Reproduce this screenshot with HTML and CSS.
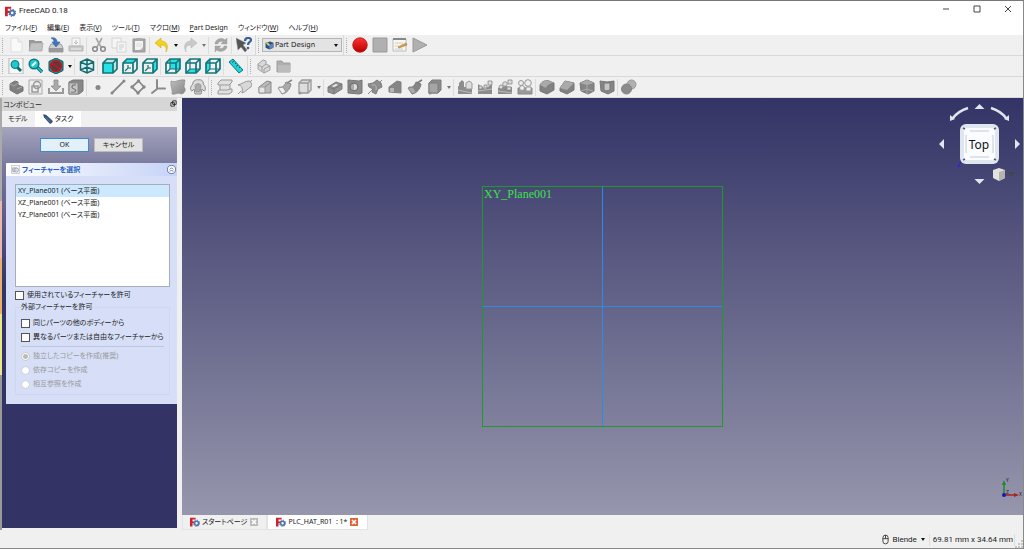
FILE: index.html
```html
<!DOCTYPE html>
<html lang="ja">
<head>
  <meta charset="UTF-8">
  <meta name="viewport" content="width=device-width, initial-scale=1.0">
  <title>FreeCAD 0.18</title>
  <link rel="stylesheet" href="styles.css">
</head>
<body>
  <svg class="sprite" aria-hidden="true">
    <defs>
      <linearGradient id="red" x1="0" y1="0" x2="0" y2="1"><stop offset="0" stop-color="#f33"/><stop offset="1" stop-color="#b80000"/></linearGradient>
      <linearGradient id="grey" x1="0" y1="0" x2="1" y2="1"><stop offset="0" stop-color="#bdbdbd"/><stop offset="1" stop-color="#868686"/></linearGradient>
    </defs>

    <!-- application -->
    <symbol id="i-app" viewBox="0 0 16 16"><path d="M0 1h9v3H4v3h4v3H4v5H0z" fill="#d0202a"/><circle cx="10.5" cy="10" r="5" fill="none" stroke="#3a5fa0" stroke-width="1.5" stroke-dasharray="2 1.9"/><circle cx="10.5" cy="10" r="3.2" fill="#fff" stroke="#4a72b4" stroke-width="2.6"/></symbol>

    <!-- file toolbar -->
    <symbol id="i-new" viewBox="0 0 16 16"><path d="M3 1h7l4 4v10H3z" fill="#f9f9f9" stroke="#dedede"/><path d="M10 1v4h4" fill="#eee" stroke="#ddd"/></symbol>
    <symbol id="i-open" viewBox="0 0 16 16"><path d="M1 3h5l1 1h7v10H1z" fill="#999"/><path d="M3 6h12l-1 8H1z" fill="#c2c2c2" stroke="#a5a5a5" stroke-width=".7"/></symbol>
    <symbol id="i-save" viewBox="0 0 16 16"><path d="M3 7h10l2 4v4H1v-4z" fill="#cfcfcf" stroke="#8d8d8d" stroke-width=".8"/><path d="M1 11h14v4H1z" fill="#999"/><path d="M3 1c4-1 6 1 6 4h3l-4 5-4-5h2c0-2-1-3-3-4z" fill="#3c78c0" stroke="#28548c" stroke-width=".5"/></symbol>
    <symbol id="i-print" viewBox="0 0 16 16"><path d="M4 1h8v8H4z" fill="#f5f5f5" stroke="#d2d2d2"/><path d="M8 3v4M6 5l2 2 2-2" stroke="#bbb" fill="none"/><path d="M1 9h14v5H1z" fill="#c9c9c9" stroke="#b5b5b5"/><path d="M3 12h10" stroke="#eee"/></symbol>
    <symbol id="i-cut" viewBox="0 0 16 16"><path d="M5 1l5 9M11 1L6 10" stroke="#a9a9a9" stroke-width="1.6"/><g fill="none" stroke="#888" stroke-width="1.5"><circle cx="4" cy="12" r="2.3"/><circle cx="12" cy="12" r="2.3"/></g></symbol>
    <symbol id="i-copy" viewBox="0 0 16 16"><g fill="#f5f5f5" stroke="#d4d4d4"><path d="M1 1h9v10H1z"/><path d="M6 5h9v10H6z"/></g><path d="M8 8h5M8 10h5M8 12h3" stroke="#ccc"/></symbol>
    <symbol id="i-paste" viewBox="0 0 16 16"><path d="M2 2h12v13H2z" fill="#a5a5a5" stroke="#999"/><path d="M4 4h8v9H4z" fill="#f3f3f3"/><path d="M5 1h6v3H5z" fill="#aaa"/><path d="M5 7h6M5 9h6" stroke="#ddd"/><path d="M12 10v3H9z" fill="#bbb"/></symbol>
    <symbol id="i-undo" viewBox="0 0 16 16"><path d="M7 1v3c6 0 8 5 5 11 1-5-1-7-5-7v3L1 6z" fill="#f2d21c" stroke="#cfae10" stroke-width=".6"/></symbol>
    <symbol id="i-redo" viewBox="0 0 16 16"><path d="M9 1v3C3 4 1 9 4 15 3 10 5 8 9 8v3l6-5z" fill="#c9c9c9" stroke="#b8b8b8" stroke-width=".6"/></symbol>
    <symbol id="i-refresh" viewBox="0 0 16 16"><path d="M2 7c0-5 7-7 10-4l2-2v6H8l2-2C8 4 5 5 5 7zM14 9c0 5-7 7-10 4l-2 2V9h6l-2 2c2 1 5 0 5-2z" fill="#a6a6a6" stroke="#999" stroke-width=".4"/></symbol>
    <symbol id="i-help" viewBox="0 0 16 16"><path d="M0 1l10 5-3 2 4 5-2 2-4-5-3 3z" fill="#555" stroke="#888" stroke-width=".5"/><path d="M9 4c0-4 6-4 6-1 0 2-3 2-3 5" fill="none" stroke="#3b6096" stroke-width="2.2"/><circle cx="12" cy="11" r="1.3" fill="#3b6096"/></symbol>
    <symbol id="i-record" viewBox="0 0 16 16"><circle cx="8" cy="8" r="7.3" fill="url(#red)" stroke="#a11" stroke-width=".7"/></symbol>
    <symbol id="i-stop" viewBox="0 0 16 16"><path d="M1 1h14v14H1z" fill="#b0b0b0" stroke="#999"/></symbol>
    <symbol id="i-edit" viewBox="0 0 16 16"><path d="M1 2h13v12H1z" fill="#f7f7f2" stroke="#bbb"/><path d="M1 1h13v2H1z" fill="#888"/><path d="M3 6h8M3 9h4M3 12h8" stroke="#ccc"/><path d="M6 10l8-4 1 2-8 3z" fill="#e3a13a" stroke="#9a6a23" stroke-width=".5"/></symbol>
    <symbol id="i-play" viewBox="0 0 16 16"><path d="M1 1l14 7-14 7z" fill="#b0b0b0" stroke="#999"/></symbol>

    <!-- view toolbar -->
    <symbol id="i-fitall" viewBox="0 0 16 16"><path d="M1 0h14v16H1z" fill="#f8f8f8" stroke="#b5b5b5"/><path d="M9 9l4 4" stroke="#0b6a70" stroke-width="3"/><circle cx="7" cy="6.500" r="3.800" fill="#25c8cd" stroke="#0b8a90" stroke-width="1.300"/></symbol>
    <symbol id="i-fitsel" viewBox="0 0 16 16"><path d="M9 9l5 5" stroke="#0b6a70" stroke-width="3.4"/><path d="M9 9l5 5" stroke="#25c8cd" stroke-width="1.6"/><circle cx="6" cy="6" r="4.8" fill="#25c8cd" stroke="#0b7a80" stroke-width="1.5"/><path d="M4 8l4-4" stroke="#dff" stroke-width="2"/></symbol>
    <symbol id="i-drawstyle" viewBox="0 0 16 16"><path d="M8 0l7 3.500v9L8 16l-7-3.500v-9z" fill="#1a9499" stroke="#0b5a5e"/><circle cx="8" cy="8" r="5.300" fill="#444" stroke="#c4161c" stroke-width="1.800"/><path d="M4 5l8 6" stroke="#c4161c" stroke-width="2"/></symbol>
    <symbol id="i-axo" viewBox="0 0 16 16"><path d="M8 1l6.500 3v8L8 15l-6.500-3V4z" fill="#d8eeee"/><path d="M8 1l6.500 3v8L8 15l-6.500-3V4zM8 1v14M1.500 4L8 7l6.500-3M1.500 12L8 9l6.500 3" fill="none" stroke="#136a6e" stroke-width="1.500"/></symbol>
    <symbol id="cube" viewBox="0 0 16 16"><path d="M1 5l4-4h10v10l-4 4H1zM1 5h10v10M11 5l4-4" fill="none" stroke="#12757a" stroke-width="1.700"/></symbol>
    <symbol id="i-front" viewBox="0 0 16 16"><path d="M1 5l4-4h10v10l-4 4V5z" fill="#bfe4e4"/><path d="M1 5h10v10H1z" fill="#2be0e4"/><use href="#cube"/></symbol>
    <symbol id="i-top" viewBox="0 0 16 16"><path d="M1 5l4-4h10l-4 4z" fill="#2be0e4"/><path d="M3 13l3-3h3M6 7v3" stroke="#12757a" stroke-width="1.200" fill="none"/><use href="#cube"/></symbol>
    <symbol id="i-right" viewBox="0 0 16 16"><path d="M11 5l4-4v10l-4 4z" fill="#2be0e4"/><path d="M3 13l3-3h3M6 7v3" stroke="#12757a" stroke-width="1.200" fill="none"/><use href="#cube"/></symbol>
    <symbol id="i-rear" viewBox="0 0 16 16"><path d="M5 1h10v10H5z" fill="#2be0e4"/><path d="M5 1v10h10M1 15l4-4" stroke="#12757a" stroke-width="1.200" fill="none"/><use href="#cube"/></symbol>
    <symbol id="i-bottom" viewBox="0 0 16 16"><path d="M1 15l4-4h10l-4 4z" fill="#2be0e4"/><path d="M5 1v10h10M1 15l4-4" stroke="#12757a" stroke-width="1.200" fill="none"/><use href="#cube"/></symbol>
    <symbol id="i-left" viewBox="0 0 16 16"><path d="M1 5l4-4v10l-4 4z" fill="#2be0e4"/><path d="M5 1v10h10M1 15l4-4" stroke="#12757a" stroke-width="1.200" fill="none"/><use href="#cube"/></symbol>
    <symbol id="i-measure" viewBox="0 0 16 16"><path d="M1 4l4-3 10 11-4 3z" fill="#25d0d5" stroke="#0b7a80"/><path d="M6 3L4 4.500M8 5L7 6M10 7L8 8.500M12 9l-1 1" stroke="#0b6468"/></symbol>
    <symbol id="i-part" viewBox="0 0 16 16"><path d="M2 6l5-4 3 1v3l4 2v4l-6 3-6-4z" fill="#d9d9d9" stroke="#a0a0a0"/><path d="M2 7l4 2 4-3M6 9v4M8 11l6-3M8 11v4" fill="none" stroke="#a0a0a0"/></symbol>
    <symbol id="i-group" viewBox="0 0 16 16"><path d="M1 3h5l1 2h7v9H1z" fill="#aeaeae" stroke="#a0a0a0"/><path d="M2 7h12v7H2z" fill="#bcbcbc"/></symbol>

    <!-- part design helpers -->
    <symbol id="i-body" viewBox="0 0 16 16"><path d="M2 5l5-3 3 1v3l5 2v4l-6 3-7-4z" fill="#808080" stroke="#707070"/><path d="M2 5l4 2 4-3M9 10l5-2" fill="none" stroke="#aaa"/></symbol>
    <symbol id="i-sketch" viewBox="0 0 16 16"><path d="M1 1h13v14H1z" fill="#eee" stroke="#aaa"/><circle cx="9" cy="6" r="3.500" fill="none" stroke="#999" stroke-width="1.500"/><path d="M4 7h6v6H4z" fill="none" stroke="#999" stroke-width="1.500"/></symbol>
    <symbol id="i-import" viewBox="0 0 16 16"><path d="M1 9v5h14V9" fill="none" stroke="#999" stroke-width="2"/><path d="M6 1h4v6h3l-5 5-5-5h3z" fill="#aaa" stroke="#888" stroke-width=".7"/></symbol>
    <symbol id="i-mapsketch" viewBox="0 0 16 16"><path d="M1 3l4-2h10v11l-4 3H1z" fill="#888" stroke="#777"/><path d="M1 4h9v11H1z" fill="#c5c5c5" stroke="#888"/><path d="M8 6c-5-1-5 3-2 4s2 4-3 3" fill="none" stroke="#777" stroke-width="1.200"/></symbol>
    <symbol id="i-point" viewBox="0 0 16 16"><circle cx="8" cy="8.500" r="2.500" fill="#888"/></symbol>
    <symbol id="i-line" viewBox="0 0 16 16"><path d="M2 14L14 2" stroke="#8a8a8a" stroke-width="1.800"/><circle cx="2" cy="14" r="1.500" fill="#888"/><circle cx="14" cy="2" r="1.500" fill="#888"/></symbol>
    <symbol id="i-plane" viewBox="0 0 16 16"><path d="M8.500 2L14 8l-6 6-6-6z" fill="none" stroke="#8a8a8a" stroke-width="1.800"/><g fill="#888"><circle cx="8.500" cy="2" r="1.700"/><circle cx="14" cy="8" r="1.700"/><circle cx="8" cy="14" r="1.700"/><circle cx="2" cy="8" r="1.700"/></g></symbol>
    <symbol id="i-lcs" viewBox="0 0 16 16"><path d="M7 1v9M7 9.500h8M7 10l-5 4" stroke="#8a8a8a" stroke-width="2" stroke-linecap="round"/></symbol>
    <symbol id="i-binder" viewBox="0 0 16 16"><path d="M1 2c5 2 7-2 14-1l-1 7c3 3 0 7-3 7-3-2-6 1-9 0 1-4-2-8-1-13z" fill="url(#grey)" stroke="#888" stroke-width=".6"/></symbol>
    <symbol id="i-clone" viewBox="0 0 16 16"><path d="M3 5c-1-3 4-5 5-4 3-1 6 1 5 4 3 2 3 7 1 7l-2-2-1 5H5L4 10l-2 2c-2 0-2-5 1-7z" fill="#ddd" stroke="#8a8a8a"/><path d="M5 7c0-3 6-3 6 0l-1 6H6z" fill="#aaa" stroke="#999"/></symbol>

    <!-- additive features -->
    <symbol id="i-pad" viewBox="0 0 16 16"><g fill="#e0e0e0" stroke="#999"><path d="M1 12l3-2h11v3l-3 2H1z"/><path d="M3 5h10v5l-2 1H3z"/><path d="M1 4l3-3h11v2l-3 3H1z"/></g></symbol>
    <symbol id="i-revolve" viewBox="0 0 16 16"><path d="M1 15L15 1" stroke="#999"/><path d="M1 6c4-1 7-4 11-4 3 1 3 4 2 6-3 1-5 5-9 6 1-4-1-7-4-8z" fill="#d8d8d8" stroke="#999"/><path d="M1 6c4 0 5 4 4 8" fill="#eee" stroke="#999"/></symbol>
    <symbol id="i-loft" viewBox="0 0 16 16"><path d="M2 8l8-6 4 1v11H2z" fill="#bbb" stroke="#8a8a8a"/><path d="M2 8h6v6H2z" fill="#e5e5e5" stroke="#999"/><path d="M8 8l6-5" fill="none" stroke="#8a8a8a"/></symbol>
    <symbol id="i-pipe" viewBox="0 0 16 16"><path d="M2 8c4 1 6-2 7-5l5 2c-1 5-4 9-9 10z" fill="#aaa" stroke="#888"/><path d="M1 9l5-1 3 5-4 2z" fill="#eee" stroke="#999"/><path d="M10 4l5-3" stroke="#888" stroke-width="1.500"/></symbol>
    <symbol id="i-box" viewBox="0 0 16 16"><path d="M2 4l3-3h9v10l-3 3H2z" fill="#ddd" stroke="#999" stroke-width="1.300"/><path d="M2 4h9v10M11 4l3-3" fill="none" stroke="#999" stroke-width="1.300"/><circle cx="3" cy="14" r="1.500" fill="#999"/></symbol>

    <!-- subtractive features -->
    <symbol id="i-pocket" viewBox="0 0 16 16"><path d="M1 8l8-5 6 2v5l-8 5-6-2z" fill="#919191" stroke="#7c7c7c"/><path d="M1 8l6 2 8-5M7 10v5" fill="none" stroke="#777"/><path d="M5 7l4-2 2 1-4 2z" fill="#eee"/></symbol>
    <symbol id="i-hole" viewBox="0 0 16 16"><path d="M1 1l11 1 3-1v13l-3 1-11-1z" fill="#8a8a8a" stroke="#777"/><circle cx="7" cy="8" r="4" fill="#aaa" stroke="#6c6c6c"/><path d="M7 5a3 3 0 010 6z" fill="#ddd"/></symbol>
    <symbol id="i-groove" viewBox="0 0 16 16"><path d="M1 15L15 1" stroke="#888"/><path d="M1 5l5-1 4-3 4 3 1 4-4 2-2 5-4-2 1-3-4-2z" fill="#8e8e8e" stroke="#7c7c7c"/><path d="M5 6c3-1 5 1 4 5" fill="none" stroke="#bbb"/></symbol>
    <symbol id="i-subloft" viewBox="0 0 16 16"><path d="M2 8l8-6 4 1v11L2 13z" fill="#858585" stroke="#808080"/><path d="M3 9h4v4H3z" fill="#b5b5b5"/></symbol>
    <symbol id="i-subpipe" viewBox="0 0 16 16"><path d="M2 8c4 1 6-2 7-5l5 2c-1 5-4 9-9 10z" fill="#858585" stroke="#777"/><path d="M1 9l5-1 3 5-4 2z" fill="#aaa" stroke="#888"/><path d="M10 4l5-3" stroke="#777" stroke-width="1.500"/></symbol>
    <symbol id="i-subbox" viewBox="0 0 16 16"><path d="M2 4l3-3h9v10l-3 3H2z" fill="#8b8b8b" stroke="#7c7c7c"/><path d="M2 4h9v10H2z" fill="#a5a5a5" stroke="#7c7c7c"/><circle cx="3" cy="14" r="1.500" fill="#888"/></symbol>

    <!-- transformations -->
    <symbol id="i-mirror" viewBox="0 0 16 16"><path d="M1 7l7 1 7-1v8H1z" fill="#8c8c8c"/><path d="M1 11l14 3" stroke="#bbb"/><path d="M2 4l3-3 2 2v6H2z" fill="#8c8c8c"/><path d="M9 4l3-2 3 2v6H9z" fill="#ddd" stroke="#999"/></symbol>
    <symbol id="i-linear" viewBox="0 0 16 16"><path d="M1 5l7 5 7-5v10H1z" fill="#8c8c8c"/><path d="M1 12l14-2" stroke="#bbb"/><path d="M2 7h3v3H2zM7 6h3v3H7zM11 2h4v4h-4z" fill="#ddd" stroke="#888" stroke-width=".8"/></symbol>
    <symbol id="i-polar" viewBox="0 0 16 16"><path d="M1 9l7-2 7 1v7H1z" fill="#8c8c8c"/><path d="M1 12l14 2" stroke="#bbb"/><g fill="#ddd" stroke="#888" stroke-width=".8"><circle cx="4" cy="8" r="2"/><circle cx="8" cy="5" r="2.300"/><path d="M11 1h4v4h-4zM10 8h4v3h-4z"/></g></symbol>
    <symbol id="i-multi" viewBox="0 0 16 16"><path d="M1 9h14v6H1z" fill="#999" stroke="#888"/><g fill="#eee" stroke="#999"><circle cx="4" cy="4" r="2.500"/><circle cx="11" cy="4" r="3.300"/><circle cx="5" cy="9" r="2.500"/><path d="M9 8h5v4H9z"/></g></symbol>

    <!-- dress-up -->
    <symbol id="i-fillet" viewBox="0 0 16 16"><path d="M1 6c2-4 6-5 9-4l5 2v7l-7 4-7-3z" fill="#828282" stroke="#777"/><path d="M1 6l6 3c1-3 4-5 8-5l-5-2C6 1 2 3 1 6z" fill="#aaa"/></symbol>
    <symbol id="i-chamfer" viewBox="0 0 16 16"><path d="M1 9l5-7 9 2v7l-7 4-7-3z" fill="#828282" stroke="#777"/><path d="M1 9l5-7 9 2-7 7z" fill="#aaa"/></symbol>
    <symbol id="i-draft" viewBox="0 0 16 16"><path d="M1 4l7-3 7 3v8l-6 3-7-3z" fill="#858585" stroke="#777"/><path d="M1 4l7 2 7-2-7-3z" fill="#aaa"/><path d="M8 6v9M2 12l6-2 6 2" fill="none" stroke="#aaa"/></symbol>
    <symbol id="i-thick" viewBox="0 0 16 16"><path d="M1 2l7 1 7-1v10l-6 3-7-3z" fill="#858585" stroke="#777"/><path d="M5 4h6v7l-4 1-2-1z" fill="#c5c5c5" stroke="#777"/></symbol>
    <symbol id="i-boolean" viewBox="0 0 16 16"><circle cx="10.500" cy="5.500" r="4.500" fill="#b0b0b0" stroke="#9a9a9a"/><circle cx="5.500" cy="10" r="5" fill="#8b8b8b" stroke="#808080"/></symbol>

    <!-- panel bits -->
    <symbol id="i-pencil" viewBox="0 0 16 16"><path d="M1 1l4 1 10 9-1 3-3 1L2 5z" fill="#2f5687" stroke="#1d3454"/><path d="M4 5l8 8" stroke="#6f93bd"/></symbol>
    <symbol id="i-select" viewBox="0 0 16 16"><path d="M1 1h14v14H1z" fill="none" stroke="#667" stroke-dasharray="2 1.500"/><path d="M3 5h7v7H3z" fill="#ccd" stroke="#889"/><circle cx="10" cy="9" r="3.500" fill="#dde" stroke="#889"/></symbol>
    <symbol id="i-close" viewBox="0 0 10 10"><path d="M1 1h8v8H1z" fill="currentColor"/><path d="M3 3l4 4M7 3L3 7" stroke="#fff" stroke-width="1.600"/></symbol>
    <symbol id="i-wb" viewBox="0 0 16 16"><path d="M1 3l8-2 6 2v9l-7 3-7-3z" fill="#244f8e"/><path d="M7 7l8-3v8l-7 3z" fill="#5b83b8"/><path d="M1 3l4-1 4 5-3 2z" fill="#e7c63c"/></symbol>
  </svg>

  <div class="window">
    <header class="titlebar">
      <svg class="app-icon"><use href="#i-app"/></svg>
      <h1>FreeCAD 0.18</h1>
      <div class="window-buttons">
        <button aria-label="最小化"><svg viewBox="0 0 10 10"><path d="M2 5h6"/></svg></button>
        <button aria-label="最大化"><svg viewBox="0 0 10 10"><path d="M2 2h6v6H2z"/></svg></button>
        <button aria-label="閉じる"><svg viewBox="0 0 10 10"><path d="M2 2l6 6M8 2L2 8"/></svg></button>
      </div>
    </header>

    <nav class="menubar">
      <button>ファイル(<u>F</u>)</button>
      <button>編集(<u>E</u>)</button>
      <button>表示(<u>V</u>)</button>
      <button>ツール(<u>T</u>)</button>
      <button>マクロ(<u>M</u>)</button>
      <button><u>P</u>art Design</button>
      <button>ウィンドウ(<u>W</u>)</button>
      <button>ヘルプ(<u>H</u>)</button>
    </nav>

    <div class="toolrow">
      <div class="toolbar">
        <button class="tool" aria-label="新規"><svg><use href="#i-new"/></svg></button>
        <button class="tool" aria-label="開く"><svg><use href="#i-open"/></svg></button>
        <button class="tool" aria-label="保存"><svg><use href="#i-save"/></svg></button>
        <button class="tool" aria-label="印刷"><svg><use href="#i-print"/></svg></button>
        <span class="sep"></span>
        <button class="tool" aria-label="切り取り"><svg><use href="#i-cut"/></svg></button>
        <button class="tool" aria-label="コピー"><svg><use href="#i-copy"/></svg></button>
        <button class="tool" aria-label="貼り付け"><svg><use href="#i-paste"/></svg></button>
        <span class="sep"></span>
        <button class="tool" aria-label="元に戻す"><svg><use href="#i-undo"/></svg></button>
        <button class="drop" aria-label="元に戻す履歴"></button>
        <button class="tool" aria-label="やり直し"><svg><use href="#i-redo"/></svg></button>
        <button class="drop dim" aria-label="やり直し履歴"></button>
        <span class="sep"></span>
        <button class="tool" aria-label="更新"><svg><use href="#i-refresh"/></svg></button>
        <span class="sep"></span>
        <button class="tool" aria-label="ヘルプ"><svg><use href="#i-help"/></svg></button>
      </div>
      <div class="toolbar">
        <label class="workbench">
          <svg><use href="#i-wb"/></svg>
          <select aria-label="ワークベンチ"><option>Part Design</option></select>
        </label>
      </div>
      <div class="toolbar last">
        <button class="tool" aria-label="マクロの記録"><svg><use href="#i-record"/></svg></button>
        <button class="tool" aria-label="停止"><svg><use href="#i-stop"/></svg></button>
        <button class="tool" aria-label="マクロ"><svg><use href="#i-edit"/></svg></button>
        <button class="tool" aria-label="実行"><svg><use href="#i-play"/></svg></button>
      </div>
    </div>

    <div class="toolrow">
      <div class="toolbar">
        <button class="tool" aria-label="全てにフィット"><svg><use href="#i-fitall"/></svg></button>
        <button class="tool" aria-label="選択にフィット"><svg><use href="#i-fitsel"/></svg></button>
        <button class="tool" aria-label="描画スタイル"><svg><use href="#i-drawstyle"/></svg></button>
        <button class="drop" aria-label="描画スタイルの選択"></button>
        <span class="sep"></span>
        <button class="tool" aria-label="アイソメトリック"><svg><use href="#i-axo"/></svg></button>
        <span class="sep"></span>
        <button class="tool" aria-label="正面"><svg><use href="#i-front"/></svg></button>
        <button class="tool" aria-label="上面"><svg><use href="#i-top"/></svg></button>
        <button class="tool" aria-label="右面"><svg><use href="#i-right"/></svg></button>
        <span class="sep"></span>
        <button class="tool" aria-label="背面"><svg><use href="#i-rear"/></svg></button>
        <button class="tool" aria-label="底面"><svg><use href="#i-bottom"/></svg></button>
        <button class="tool" aria-label="左面"><svg><use href="#i-left"/></svg></button>
        <span class="sep"></span>
        <button class="tool" aria-label="測定"><svg><use href="#i-measure"/></svg></button>
      </div>
      <div class="toolbar last">
        <button class="tool" aria-label="パーツ"><svg><use href="#i-part"/></svg></button>
        <button class="tool" aria-label="グループ"><svg><use href="#i-group"/></svg></button>
      </div>
    </div>

    <div class="toolrow compact">
      <div class="toolbar">
        <button class="tool" aria-label="ボディー"><svg><use href="#i-body"/></svg></button>
        <button class="tool" aria-label="スケッチ"><svg><use href="#i-sketch"/></svg></button>
        <button class="tool" aria-label="スケッチの編集"><svg><use href="#i-import"/></svg></button>
        <button class="tool" aria-label="スケッチのマップ"><svg><use href="#i-mapsketch"/></svg></button>
        <span class="sep"></span>
        <button class="tool" aria-label="データム点"><svg><use href="#i-point"/></svg></button>
        <button class="tool" aria-label="データム線"><svg><use href="#i-line"/></svg></button>
        <button class="tool" aria-label="データム平面"><svg><use href="#i-plane"/></svg></button>
        <button class="tool" aria-label="座標系"><svg><use href="#i-lcs"/></svg></button>
        <button class="tool" aria-label="シェイプバインダー"><svg><use href="#i-binder"/></svg></button>
        <button class="tool" aria-label="クローン"><svg><use href="#i-clone"/></svg></button>
      </div>
      <div class="toolbar last">
        <button class="tool" aria-label="パッド"><svg><use href="#i-pad"/></svg></button>
        <button class="tool" aria-label="レボリューション"><svg><use href="#i-revolve"/></svg></button>
        <button class="tool" aria-label="加算ロフト"><svg><use href="#i-loft"/></svg></button>
        <button class="tool" aria-label="加算パイプ"><svg><use href="#i-pipe"/></svg></button>
        <button class="tool" aria-label="加算プリミティブ"><svg><use href="#i-box"/></svg></button>
        <button class="drop dim" aria-label="加算プリミティブの選択"></button>
        <span class="sep"></span>
        <button class="tool" aria-label="ポケット"><svg><use href="#i-pocket"/></svg></button>
        <button class="tool" aria-label="ホール"><svg><use href="#i-hole"/></svg></button>
        <button class="tool" aria-label="グルーブ"><svg><use href="#i-groove"/></svg></button>
        <button class="tool" aria-label="減算ロフト"><svg><use href="#i-subloft"/></svg></button>
        <button class="tool" aria-label="減算パイプ"><svg><use href="#i-subpipe"/></svg></button>
        <button class="tool" aria-label="減算プリミティブ"><svg><use href="#i-subbox"/></svg></button>
        <button class="drop dim" aria-label="減算プリミティブの選択"></button>
        <span class="sep"></span>
        <button class="tool" aria-label="鏡像"><svg><use href="#i-mirror"/></svg></button>
        <button class="tool" aria-label="直線状パターン"><svg><use href="#i-linear"/></svg></button>
        <button class="tool" aria-label="円状パターン"><svg><use href="#i-polar"/></svg></button>
        <button class="tool" aria-label="マルチ変換"><svg><use href="#i-multi"/></svg></button>
        <span class="sep"></span>
        <button class="tool" aria-label="フィレット"><svg><use href="#i-fillet"/></svg></button>
        <button class="tool" aria-label="面取り"><svg><use href="#i-chamfer"/></svg></button>
        <button class="tool" aria-label="抜き勾配"><svg><use href="#i-draft"/></svg></button>
        <button class="tool" aria-label="厚み"><svg><use href="#i-thick"/></svg></button>
        <span class="sep"></span>
        <button class="tool" aria-label="ブーリアン"><svg><use href="#i-boolean"/></svg></button>
      </div>
    </div>

    <div class="workspace">
      <aside class="combo-view">
        <div class="dock-title">
          <span>コンボビュー</span>
          <button aria-label="フロート"><svg viewBox="0 0 8 8"><path d="M3 1h4v4H3zM1 3h4v4H1z"/></svg></button>
        </div>
        <div class="dock-tabs">
          <button>モデル</button>
          <button class="active"><svg><use href="#i-pencil"/></svg>タスク</button>
        </div>
        <div class="task-panel">
          <div class="task-buttons">
            <button class="primary">OK</button>
            <button>キャンセル</button>
          </div>
          <section class="task-box">
            <header>
              <svg class="task-icon"><use href="#i-select"/></svg>
              <h2>フィーチャーを選択</h2>
              <button class="collapse" aria-label="折りたたむ"><svg viewBox="0 0 10 10"><circle cx="5" cy="5" r="4.500"/><path d="M3 5l2-2 2 2M3 7.500l2-2 2 2"/></svg></button>
            </header>
            <div class="task-body">
              <ul class="feature-list" role="listbox">
                <li role="option" aria-selected="true">XY_Plane001 (ベース平面)</li>
                <li role="option">XZ_Plane001 (ベース平面)</li>
                <li role="option">YZ_Plane001 (ベース平面)</li>
              </ul>
              <label class="check"><input type="checkbox">使用されているフィーチャーを許可</label>
              <fieldset>
                <legend>外部フィーチャーを許可</legend>
                <label class="check"><input type="checkbox">同じパーツの他のボディーから</label>
                <label class="check"><input type="checkbox">異なるパーツまたは自由なフィーチャーから</label>
                <hr>
                <label class="check off"><input type="radio" name="ref" checked disabled>独立したコピーを作成(推奨)</label>
                <label class="check off"><input type="radio" name="ref" disabled>依存コピーを作成</label>
                <label class="check off"><input type="radio" name="ref" disabled>相互参照を作成</label>
              </fieldset>
            </div>
          </section>
        </div>
      </aside>

      <main class="documents">
        <div class="viewport">
          <div class="plane">
            <span>XY_Plane001</span>
          </div>

          <svg class="nav-cube" viewBox="0 0 87 90">
            <g fill="none" stroke="#dfe6ee" stroke-width="2.500"><path d="M16 19Q22 11 32 8"/><path d="M55 8Q65 11 71 19"/></g>
            <g fill="#dfe6ee">
              <path d="M14 21v-6l5 4zM73 21v-6l-5 4z"/>
              <path d="M43.500 4l5 5h-10zM43.500 84l5-5h-10zM3 44l5-5v10zM84 44l-5-5v10z"/>
              <rect x="24" y="24" width="39" height="40" rx="6"/>
            </g>
            <rect x="28" y="28" width="31" height="32" rx="3" fill="#fafcff"/>
            <path d="M34 31h19M34 57h19M30 35v18M57 35v18" stroke="#c5ccd6"/>
            <path d="M27 28l2 1M60 28l-2 1M60 60l-2-1M27 60l2-1" stroke="#557" stroke-width="1.500"/>
            <text class="cube-face" x="43" y="49">Top</text>
            <text class="cube-z" x="21" y="67">z</text>
            <path d="M57 70l6-2 6 2v8l-6 3-6-3z" fill="#e2e2de"/><path d="M63 72l6-2v8l-6 3z" fill="#b5b5b0"/>
            <path d="M72 72h7l-3.500 4z" fill="#444"/>
          </svg>

          <svg class="axes" viewBox="0 0 24 24">
            <path d="M5 18V6" stroke="#1d8a2c" stroke-width="1.500"/><path d="M5 3l2 5H3z" fill="#1d8a2c"/>
            <path d="M5 18h11" stroke="#a22" stroke-width="1.500"/><path d="M20 18l-5 2v-4z" fill="#a22"/>
            <circle cx="5" cy="18" r="2" fill="#1a1aa5"/>
            <text x="7" y="5">Y</text><text x="20" y="19">X</text><text x="7" y="17">Z</text>
          </svg>
        </div>

        <div class="doc-tabs">
          <div class="doc-tab"><svg><use href="#i-app"/></svg><span>スタートページ</span><button aria-label="閉じる"><svg><use href="#i-close"/></svg></button></div>
          <div class="doc-tab active"><svg><use href="#i-app"/></svg><span>PLC_HAT_R01 &nbsp;: 1*</span><button aria-label="閉じる"><svg><use href="#i-close"/></svg></button></div>
        </div>
      </main>
    </div>

    <footer class="statusbar">
      <button class="nav-style">
        <svg viewBox="0 0 8 12"><path d="M1 4a3 3 0 016 0v4a3 3 0 01-6 0zM4 1v4M1 5h6"/></svg>
        Blende<span class="caret"></span>
      </button>
      <output>69.81 mm x 34.64 mm</output>
      <svg class="grip" viewBox="0 0 8 8"><path d="M6 0h2v2H6zM3 3h2v2H3zM6 3h2v2H6zM0 6h2v2H0zM3 6h2v2H3zM6 6h2v2H6z"/></svg>
    </footer>
  </div>
</body>
</html>
```

FILE: styles.css
```css
* {
  margin: 0;
  padding: 0;
  box-sizing: border-box;
}

body {
  font-family: 'Noto Sans', 'Noto Sans CJK JP', sans-serif;
  font-size: 7px;
  line-height: 12px;
  font-feature-settings: 'palt';
  color: #222;
  background: #f0f0f0;
}

button,
select,
input {
  font: inherit;
  font-feature-settings: inherit;
  color: inherit;
  background: none;
  border: none;
}

.sprite {
  position: absolute;
  width: 0;
  height: 0;
}

.window {
  display: flex;
  flex-direction: column;
  height: 100vh;
  border-top: 1px solid #777;
  border-right: 1px solid #888;
  border-bottom: 1px solid #888;
}

/* title and menu */
.titlebar {
  display: flex;
  align-items: center;
  height: 20px;
  padding-left: 5px;
  gap: 3px;
  background: #fff;
}

.titlebar h1 {
  font-family: Roboto, sans-serif;
  font-size: 8px;
  font-weight: normal;
}

.app-icon {
  width: 11px;
  height: 11px;
}

.window-buttons {
  display: flex;
  margin-left: auto;
}

.window-buttons button {
  width: 31px;
  height: 18px;
}

.window-buttons svg {
  width: 10px;
  height: 10px;
  fill: none;
  stroke: #444;
}

.menubar {
  display: flex;
  gap: 10px;
  height: 14px;
  padding-left: 5px;
  background: #fff;
}

/* toolbars */
.toolrow {
  display: flex;
  height: 21px;
  border-bottom: 1px solid #d9d9d9;
}

.toolbar {
  display: flex;
  align-items: center;
  padding-right: 1px;
  border-right: 1px solid #d9d9d9;
}

.toolbar.last {
  border-right: none;
}

.toolbar::before {
  content: '';
  width: 2px;
  height: 15px;
  margin: 0 1px 0 2px;
  border-left: 1px dotted #aaa;
}

.compact .toolbar {
  padding-right: 0;
}

.tool {
  display: flex;
  align-items: center;
  justify-content: center;
  width: 20px;
  height: 20px;
}

.tool svg {
  width: 16px;
  height: 16px;
}

.sep {
  width: 3px;
  height: 17px;
  border-left: 1px solid #dcdcdc;
}

.compact .sep {
  width: 2px;
}

.drop {
  width: 8px;
  height: 20px;
}

.drop::before,
.caret {
  content: '';
  display: inline-block;
  border: 2px solid transparent;
  border-top: 3px solid #111;
  border-bottom: none;
  vertical-align: middle;
}

.drop.dim::before {
  border-top-color: #777;
}

.workbench {
  display: flex;
  align-items: center;
  width: 80px;
  height: 14px;
  padding: 0 3px 0 2px;
  gap: 1px;
  border: 1px solid #b5b5b5;
  background: #e3e3e3;
}

.workbench svg {
  width: 9px;
  height: 9px;
}

.workbench select {
  flex: 1;
  appearance: none;
  font-family: 'DejaVu Sans', sans-serif;
}

.workbench::after {
  content: '';
  border: 2px solid transparent;
  border-top: 3px solid #111;
  border-bottom: none;
}

/* combo view dock */
.workspace {
  display: flex;
  flex: 1;
  min-height: 0;
}

.combo-view {
  display: flex;
  flex-direction: column;
  width: 182px;
  padding: 0 5px 2px 0;
  border-left: 2px solid #999;
  border-image: linear-gradient(#aaa 0 24%, #e8b8b0 24% 37%, #e8b070 37% 50%, #e8e88a 50% 64%, #999 64%) 1;
}

.dock-title {
  display: flex;
  align-items: center;
  justify-content: space-between;
  height: 13px;
  padding-left: 1px;
  background: #d6d6d6;
}

.dock-title button {
  width: 8px;
  height: 12px;
}

.dock-title svg {
  width: 7px;
  height: 7px;
  fill: #eee;
  stroke: #222;
}

.dock-tabs {
  display: flex;
  height: 16px;
}

.dock-tabs button {
  padding: 0 7px 0 6px;
}

.dock-tabs .active {
  display: flex;
  align-items: center;
  gap: 2px;
  padding: 0 8px;
  background: #fff;
}

.dock-tabs svg {
  width: 10px;
  height: 10px;
}

.task-panel {
  flex: 1;
  padding: 11px 0 0 4px;
  background: linear-gradient(#a5a5bf, #7c7c9f 36px, #333366 160px);
}

.task-buttons {
  display: flex;
  justify-content: center;
  gap: 5px;
  margin-bottom: 11px;
}

.task-buttons button {
  width: 49px;
  height: 14px;
  line-height: 12px;
  border: 1px solid #bbb;
  background: #e3e3e3;
}

.task-buttons .primary {
  border-color: #3a8bd0;
  background: #e3f0fa;
}

.task-box {
  background: #d6dff7;
}

.task-box header {
  display: flex;
  align-items: center;
  gap: 2px;
  height: 13px;
  padding: 0 1px 0 5px;
  border-radius: 2px 2px 0 0;
  background: linear-gradient(90deg, #fff, #c6d3f7);
}

.task-box h2 {
  font-size: 7px;
  color: #215dc6;
}

.task-icon {
  width: 9px;
  height: 9px;
}

.collapse {
  width: 9px;
  height: 9px;
  margin-left: auto;
}

.collapse svg {
  display: block;
  width: 9px;
  height: 9px;
  fill: #fff;
  stroke: #5c6c9c;
}

.task-body {
  padding: 8px 7px 9px 9px;
}

.feature-list {
  height: 103px;
  margin-bottom: 1px;
  border: 1px solid #a6adba;
  background: #fff;
  list-style: none;
}

.feature-list li {
  padding-left: 2px;
}

.feature-list [aria-selected='true'] {
  background: #cce8ff;
}

.check {
  display: flex;
  align-items: center;
  gap: 3px;
  height: 14px;
  white-space: nowrap;
}

.check input {
  flex: none;
  appearance: none;
  width: 9px;
  height: 9px;
  border: 1px solid #555;
  background: #fff;
}

.check input[type='radio'] {
  border-color: #ccc;
  border-radius: 50%;
}

.check input[type='radio']:checked {
  background: radial-gradient(#bbb 0 2px, #fff 3px);
}

.check.off {
  color: #999;
}

fieldset {
  min-width: 0;
  padding: 4px 5px 3px;
  border: 1px solid #ced7ec;
}

legend {
  height: 10px;
  line-height: 10px;
}

fieldset hr {
  margin: 2px 0;
  border: none;
  border-top: 1px solid #bec6da;
}

/* 3D view */
.documents {
  display: flex;
  flex-direction: column;
  flex: 1;
}

.viewport {
  position: relative;
  display: flex;
  align-items: center;
  justify-content: center;
  flex: 1;
  background: linear-gradient(#333366, #9696ad);
}

.plane {
  width: 241px;
  height: 241px;
  padding: 0 1px;
  border: 1px solid #1d9a2c;
  background:
    linear-gradient(#2a8be8, #2a8be8) center / 1px 100% no-repeat,
    linear-gradient(#2a8be8, #2a8be8) center / 100% 1px no-repeat;
}

.plane span {
  font-family: 'Liberation Serif', serif;
  font-size: 12px;
  line-height: 14px;
  color: #3fe04a;
}

.nav-cube {
  position: absolute;
  top: 2px;
  right: 0;
  width: 87px;
  height: 90px;
}

.cube-face {
  font-size: 12px;
  text-anchor: middle;
  fill: #111;
}

.cube-z {
  font-size: 9px;
  font-style: italic;
  fill: #22d;
}

.axes {
  position: absolute;
  right: 0;
  bottom: 14px;
  width: 24px;
  height: 24px;
  overflow: visible;
}

.axes text {
  font-size: 5px;
  fill: #222;
}

.doc-tabs {
  display: flex;
  height: 15px;
}

.doc-tab {
  display: flex;
  align-items: center;
  gap: 2px;
  padding: 0 7px;
  border: 1px solid #e3e3e3;
  border-top: none;
}

.doc-tab.active {
  padding: 0 8px;
  background: #fff;
}

.doc-tab svg {
  display: block;
  width: 10px;
  height: 10px;
}

.doc-tab button {
  color: #bbb;
}

.doc-tab.active button {
  color: #e0623c;
}

/* status bar */
.statusbar {
  display: flex;
  align-items: center;
  justify-content: flex-end;
  height: 18px;
  padding-top: 1px;
  font-family: Roboto, sans-serif;
  font-size: 8px;
}

.nav-style {
  display: flex;
  align-items: center;
  gap: 4px;
  padding-right: 4px;
}

.nav-style svg {
  width: 7px;
  height: 11px;
  fill: none;
  stroke: #333;
}

.statusbar output {
  padding: 0 1px 0 3px;
  border-left: 1px solid #ddd;
  border-right: 1px solid #ddd;
}

.grip {
  align-self: flex-end;
  width: 8px;
  height: 8px;
  fill: #c5c5c5;
}
```
